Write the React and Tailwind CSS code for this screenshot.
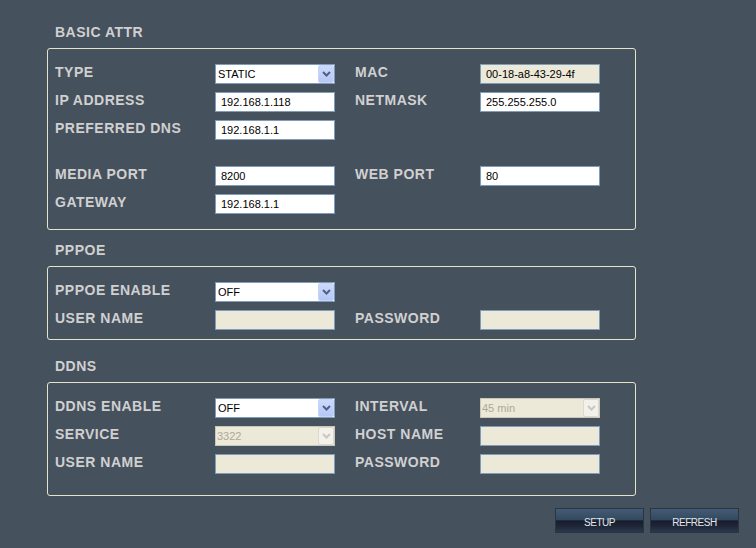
import React from "react";

const FONT = { fontFamily: '"Liberation Sans", Arial, sans-serif' };

function Chevron({ color }) {
  return (
    <svg width="9" height="6" viewBox="0 0 9 6" className="block">
      <path d="M1 1 L4.5 4.5 L8 1" fill="none" stroke={color} strokeWidth="2" />
    </svg>
  );
}

function TextBox({ value = "", disabled = false, readOnly = false }) {
  const bg = disabled || readOnly ? "bg-[#ece9d8]" : "bg-white";
  return (
    <div
      className={`w-[120px] h-[20px] border border-[#7f9db9] ${bg} text-[11px] leading-[18px] pl-[5px] text-black whitespace-nowrap overflow-hidden`}
    >
      {value}
    </div>
  );
}

function Select({ value, disabled = false }) {
  if (disabled) {
    return (
      <div className="w-[120px] h-[20px] border border-[#cac8bb] bg-[#ece9d8] flex text-[11px] leading-[18px] text-[#aca899]">
        <div className="flex-1 pl-[1px] whitespace-nowrap overflow-hidden">{value}</div>
        <div className="w-[16px] h-[18px] bg-[#f2f1ea] border border-[#dcdad0] rounded-[2px] flex items-center justify-center">
          <Chevron color="#cac8be" />
        </div>
      </div>
    );
  }
  return (
    <div className="w-[120px] h-[20px] border border-[#7f9db9] bg-white flex text-[11px] leading-[18px] text-black">
      <div className="flex-1 pl-[2px] whitespace-nowrap overflow-hidden">{value}</div>
      <div className="w-[16px] h-[18px] bg-[linear-gradient(to_bottom,#cdd9fc,#b6c7f6)] border border-[#c6d4f8] rounded-[2px] flex items-center justify-center">
        <Chevron color="#4d6185" />
      </div>
    </div>
  );
}

function Label({ children, w }) {
  return (
    <div
      className={`${w} h-[20px] text-[14px] leading-[16px] font-bold tracking-[0.5px] text-[#d0d0d0] whitespace-nowrap`}
    >
      {children}
    </div>
  );
}

function Row({ l1, c1, l2, c2, className = "" }) {
  return (
    <div className={`flex h-[20px] items-start ${className}`}>
      <Label w="w-[160px]">{l1}</Label>
      <div className="w-[120px]">{c1}</div>
      <div className="w-[20px]" />
      {l2 ? <Label w="w-[125px]">{l2}</Label> : null}
      {c2 ? <div className="w-[120px]">{c2}</div> : null}
    </div>
  );
}

function Heading({ children, className = "" }) {
  return (
    <div
      className={`ml-[8px] h-[16px] text-[14px] leading-[16px] font-bold tracking-[0.5px] text-[#d0d0d0] ${className}`}
    >
      {children}
    </div>
  );
}

function Box({ children, className = "" }) {
  return (
    <div
      className={`w-[589px] border border-[#e6e3cc] rounded-[3px] pt-[15px] pl-[7px] flex flex-col gap-[8px] ${className}`}
    >
      {children}
    </div>
  );
}

function Button({ children }) {
  return (
    <div className="w-[89px] h-[25px] border border-[#2a3442] bg-[linear-gradient(to_bottom,#435c74_0%,#34495f_46%,#161d2c_52%,#1e2738_75%,#2b384c_100%)] flex items-center justify-center pt-[3px] text-[10px] tracking-[-0.5px] text-[#e4e6ea]">
      {children}
    </div>
  );
}

export default function App() {
  return (
    <div className="w-[756px] h-[548px] bg-[#46515e] overflow-hidden" style={FONT}>
      <div className="pl-[47px] pt-[24px]">
        <Heading>BASIC ATTR</Heading>
        <Box className="mt-[8px] h-[182px]">
          <Row l1="TYPE" c1={<Select value="STATIC" />} l2="MAC" c2={<TextBox value="00-18-a8-43-29-4f" readOnly />} />
          <Row l1="IP ADDRESS" c1={<TextBox value="192.168.1.118" />} l2="NETMASK" c2={<TextBox value="255.255.255.0" />} />
          <Row l1="PREFERRED DNS" c1={<TextBox value="192.168.1.1" />} />
          <Row className="mt-[18px]" l1="MEDIA PORT" c1={<TextBox value="8200" />} l2="WEB PORT" c2={<TextBox value="80" />} />
          <Row l1="GATEWAY" c1={<TextBox value="192.168.1.1" />} />
        </Box>

        <Heading className="mt-[12px]">PPPOE</Heading>
        <Box className="mt-[8px] h-[74px]">
          <Row l1="PPPOE ENABLE" c1={<Select value="OFF" />} />
          <Row l1="USER NAME" c1={<TextBox disabled />} l2="PASSWORD" c2={<TextBox disabled />} />
        </Box>

        <Heading className="mt-[18px]">DDNS</Heading>
        <Box className="mt-[8px] h-[114px]">
          <Row l1="DDNS ENABLE" c1={<Select value="OFF" />} l2="INTERVAL" c2={<Select value="45 min" disabled />} />
          <Row l1="SERVICE" c1={<Select value="3322" disabled />} l2="HOST NAME" c2={<TextBox disabled />} />
          <Row l1="USER NAME" c1={<TextBox disabled />} l2="PASSWORD" c2={<TextBox disabled />} />
        </Box>
      </div>
      <div className="mt-[12px] pr-[17px] flex justify-end gap-[6px]">
        <Button>SETUP</Button>
        <Button>REFRESH</Button>
      </div>
    </div>
  );
}
